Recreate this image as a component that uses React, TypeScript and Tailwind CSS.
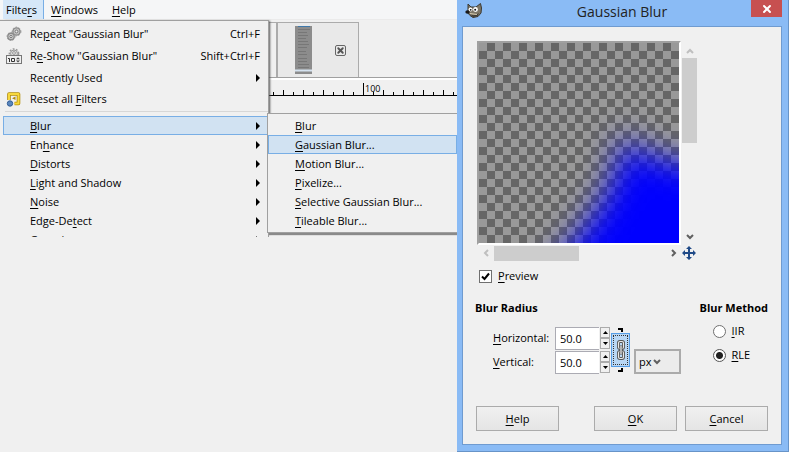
import React, { useState } from 'react';
import { XIcon } from 'lucide-react';

interface MenuEntry {
  label: string;
  mnemonic?: number;
  shortcut?: string;
  icon?: React.ReactNode;
  submenu?: boolean;
  active?: boolean;
}

// Underlines the access key of a caption
function Caption({ text, mnemonic }: { text: string; mnemonic?: number }) {
  if (mnemonic === undefined) return <>{text}</>;
  return (
    <>
      {text.slice(0, mnemonic)}
      <span className="underline underline-offset-2">{text[mnemonic]}</span>
      {text.slice(mnemonic + 1)}
    </>
  );
}

function GearsIcon() {
  return (
    <svg width="16" height="16" viewBox="0 0 16 16" fill="none">
      <circle cx="10.5" cy="5.5" r="3.6" fill="#c4c4c4" stroke="#8a8a8a" strokeWidth="1.4" />
      <circle cx="10.5" cy="5.5" r="4.4" stroke="#999" strokeWidth="1" strokeDasharray="1.6 1.6" />
      <circle cx="10.5" cy="5.5" r="1.4" fill="#eee" stroke="#777" />
      <circle cx="5" cy="10.5" r="3.2" fill="#cfcfcf" stroke="#8a8a8a" strokeWidth="1.4" />
      <circle cx="5" cy="10.5" r="4" stroke="#999" strokeWidth="1" strokeDasharray="1.5 1.5" />
      <circle cx="5" cy="10.5" r="1.2" fill="#eee" stroke="#777" />
    </svg>
  );
}

function ReshowIcon() {
  return (
    <svg width="16" height="16" viewBox="0 0 16 16" fill="none">
      <circle cx="8" cy="5.5" r="4.6" stroke="#999" strokeWidth="1.5" strokeDasharray="1.8 1.5" />
      <circle cx="8" cy="5.5" r="3.5" fill="#dcdcdc" stroke="#999" />
      <circle cx="8" cy="5" r="1.4" fill="#efefef" stroke="#999" />
      <rect x="0.5" y="7.5" width="15" height="8" fill="#f0f0f0" stroke="#777" />
      <path d="M2 10.5H3.5V14M5.5 10.5h3v3h-3z" stroke="#333" />
      <path d="M10 11.3h4L12 9.3zM10 12.5h4L12 14.5z" fill="#444" />
    </svg>
  );
}

function ResetIcon() {
  return (
    <svg width="16" height="16" viewBox="0 0 16 16" fill="none">
      <path d="M3 9V3H12.5V12.5H8.5" stroke="#b28c0a" strokeWidth="3.6" strokeLinejoin="round" />
      <path d="M3 9V3H12.5V12.5H8.5" stroke="#f7d83c" strokeWidth="2" strokeLinejoin="round" />
      <path d="M9.5 5.5V9L6 7.2z" fill="#b28c0a" />
      <circle cx="4" cy="12.5" r="2.7" fill="#5b87bd" stroke="#315c96" />
    </svg>
  );
}

function WilberIcon() {
  return (
    <svg width="18" height="16" viewBox="0 0 18 16">
      <path d="M3 1L6 4L11 4L15.5 0.5L16.5 5L16 10L13 13.5L8 14.5L5 12.5L3 10Z" fill="#7d7666" stroke="#3b3831" />
      <path d="M5 11Q9 14 14 10L12.5 13L8 14Z" fill="#3d3a33" />
      <circle cx="5.5" cy="6.5" r="2" fill="#fff" />
      <circle cx="10.5" cy="6.5" r="2.4" fill="#fff" />
      <circle cx="5.7" cy="6.8" r="0.9" fill="#111" />
      <circle cx="10.2" cy="6.8" r="1" fill="#111" />
      <ellipse cx="2.5" cy="9" rx="2.2" ry="1.7" fill="#1a1a1a" />
      <path d="M5 10.5L12 11.5" stroke="#d8ccb0" />
    </svg>
  );
}

function MoveIcon() {
  return (
    <svg width="14" height="14" viewBox="0 0 14 14" fill="#204a87">
      <path d="M7 0L10 3H8V6H11V4L14 7L11 10V8H8V11H10L7 14L4 11H6V8H3V10L0 7L3 4V6H6V3H4Z" />
    </svg>
  );
}

function ChainIcon() {
  return (
    <svg width="8" height="20" viewBox="0 0 8 20" fill="none">
      <rect x="1.5" y="1.5" width="5" height="7" rx="1.5" stroke="#555" strokeWidth="3" />
      <rect x="1.5" y="11.5" width="5" height="7" rx="1.5" stroke="#555" strokeWidth="3" />
      <rect x="1.5" y="1.5" width="5" height="7" rx="1.5" stroke="#e8e8e8" strokeWidth="1.2" />
      <rect x="1.5" y="11.5" width="5" height="7" rx="1.5" stroke="#e8e8e8" strokeWidth="1.2" />
      <path d="M4 5.5V14.5" stroke="#555" strokeWidth="3" />
      <path d="M4 6V14" stroke="#f4f4f4" strokeWidth="1.2" />
    </svg>
  );
}

function Chevron({ className, color }: { className?: string; color: string }) {
  return (
    <svg width="8" height="6" viewBox="0 0 8 6" fill="none" className={className}>
      <path d="M1 1L4 4L7 1" stroke={color} strokeWidth="2" />
    </svg>
  );
}

const filterItems: MenuEntry[] = [
  { label: 'Repeat "Gaussian Blur"', mnemonic: 2, shortcut: 'Ctrl+F', icon: <GearsIcon /> },
  { label: 'Re-Show "Gaussian Blur"', mnemonic: 1, shortcut: 'Shift+Ctrl+F', icon: <ReshowIcon /> },
  { label: 'Recently Used', submenu: true },
  { label: 'Reset all Filters', mnemonic: 10, icon: <ResetIcon /> },
];

const filterGroups: MenuEntry[] = [
  { label: 'Blur', mnemonic: 0, submenu: true, active: true },
  { label: 'Enhance', mnemonic: 2, submenu: true },
  { label: 'Distorts', mnemonic: 0, submenu: true },
  { label: 'Light and Shadow', mnemonic: 0, submenu: true },
  { label: 'Noise', mnemonic: 0, submenu: true },
  { label: 'Edge-Detect', mnemonic: 7, submenu: true },
  { label: 'Generic', mnemonic: 0, submenu: true },
];

const blurItems: MenuEntry[] = [
  { label: 'Blur', mnemonic: 0 },
  { label: 'Gaussian Blur...', mnemonic: 0, active: true },
  { label: 'Motion Blur...', mnemonic: 0 },
  { label: 'Pixelize...', mnemonic: 0 },
  { label: 'Selective Gaussian Blur...', mnemonic: 0 },
  { label: 'Tileable Blur...', mnemonic: 0 },
];

function MenuRow({ item, tall }: { item: MenuEntry; tall?: boolean }) {
  return (
    <button
      role="menuitem"
      className={`flex w-full shrink-0 items-center border pr-[7px] text-left whitespace-nowrap ${
        tall ? 'h-[22px]' : 'h-[19px]'
      } ${item.active ? 'border-[#78aee5] bg-[#d1e2f2]' : 'border-transparent'}`}
    >
      <span className="flex w-[26px] shrink-0 items-center pl-[2px]">{item.icon}</span>
      <span className="flex-1">
        <Caption text={item.label} mnemonic={item.mnemonic} />
      </span>
      {item.shortcut && <span>{item.shortcut}</span>}
      {item.submenu && (
        <svg width="4" height="8" viewBox="0 0 4 8">
          <path d="M0 0L4 4L0 8Z" />
        </svg>
      )}
    </button>
  );
}

function FiltersMenu() {
  return (
    <div
      role="menu"
      className="absolute top-5 left-0 h-[217px] w-[269px] overflow-hidden border-t border-r border-[#a0a0a0] bg-[#f0f0f0] pt-[2px] pl-[3px] shadow-[3px_-1px_2px_-2px_#555]"
    >
      {filterItems.map((item) => (
        <MenuRow key={item.label} item={item} tall={!!item.shortcut || item.submenu} />
      ))}
      <div className="mt-[3px] mb-1 ml-[2px] border-t border-[#d7d7d7]" />
      {filterGroups.map((item) => (
        <MenuRow key={item.label} item={item} />
      ))}
    </div>
  );
}

function BlurMenu() {
  return (
    <div
      role="menu"
      className="absolute top-[113px] right-0 left-[267px] border border-r-0 border-[#a0a0a0] bg-[#f0f0f0] py-[2px] shadow-[2px_2px_1px_#8a8a8a]"
    >
      {blurItems.map((item) => (
        <MenuRow key={item.label} item={item} />
      ))}
    </div>
  );
}

function Ruler() {
  return (
    <svg className="block h-4 w-full" shapeRendering="crispEdges">
      <defs>
        <pattern id="ticks" x="3" y="0" width="20" height="16" patternUnits="userSpaceOnUse">
          <path d="M0.5 10V16M10.5 12V16" stroke="#000" />
        </pattern>
      </defs>
      <rect width="100%" height="16" fill="url(#ticks)" />
      <path d="M363.5 3V16" stroke="#000" />
      <rect y="15" width="100%" height="1" />
      <text x="365" y="12" fontSize="9">100</text>
    </svg>
  );
}

function ImageWindow() {
  return (
    <section className="relative min-w-0 flex-1 overflow-hidden bg-[#f0f0f0]">
      <nav className="flex h-5 items-stretch border-b border-[#ebebeb] bg-[#f5f6f7] pl-[3px]">
        <button className="border-r border-[#78aee5] bg-[#d5e7f8] pr-[6px] pl-[3px]">
          <Caption text="Filters" mnemonic={5} />
        </button>
        <button className="px-[7px]">
          <Caption text="Windows" mnemonic={0} />
        </button>
        <button className="px-[7px]">
          <Caption text="Help" mnemonic={0} />
        </button>
      </nav>
      <div className="flex h-[58px] items-end border-b border-[#a0a0a0]">
        <div className="h-[55px] w-[276px] border-t border-[#ababab]" />
        <div className="flex h-[55px] w-[83px] items-center justify-between border border-b-0 border-l-2 border-[#ababab] bg-[#e9e9e9] pr-3 pl-[17px]">
          <svg width="17" height="48" viewBox="0 0 17 48">
            <rect width="17" height="48" fill="#8c8c8c" />
            <path
              d="M3 3.5H15M3 6.5H12M3 9.5H13M3 12.5H11M3 15.5H13M3 18.5H14M3 21.5H12M3 25.5H11M3 28.5H12M3 32.5H12M3 35.5H12M3 38.5H14M3 41.5H14"
              stroke="#777"
            />
            <path d="M3 0.5H15" stroke="#3e78aa" />
            <path d="M0 44.5H17" stroke="#d5e2ef" strokeWidth="2" />
          </svg>
          <button
            aria-label="Close image"
            className="flex size-[11px] items-center justify-center rounded-[2px] border border-[#666] text-[#555]"
          >
            <XIcon size={9} strokeWidth={5} />
          </button>
        </div>
      </div>
      <div className="border-t-2 border-white">
        <Ruler />
      </div>
      <FiltersMenu />
      <BlurMenu />
    </section>
  );
}

function PreviewCanvas() {
  return (
    <svg className="block" width="200" height="200" viewBox="0 0 200 200">
      <defs>
        <pattern id="checks" width="16" height="16" patternUnits="userSpaceOnUse">
          <rect width="16" height="16" fill="#999" />
          <path d="M8 0h8v8H8zM0 8h8v8H0z" fill="#666" />
        </pattern>
        <filter id="soft" x="-50%" y="-50%" width="200%" height="200%" colorInterpolationFilters="sRGB">
          <feGaussianBlur stdDeviation="16" />
        </filter>
      </defs>
      <rect width="200" height="200" fill="url(#checks)" />
      <path d="M30 270L92 205L119 168L136 136L144 96L170 114L200 121L300 126V300H30Z" fill="#00f" filter="url(#soft)" />
    </svg>
  );
}

function Preview() {
  return (
    <div className="ml-[2px] grid w-fit grid-cols-[204px_15px] gap-x-px">
      <div className="border-2 border-t-[#a0a0a0] border-r-white border-b-white border-l-[#a0a0a0]">
        <PreviewCanvas />
      </div>
      <div className="flex flex-col items-center justify-between pt-[7px] pb-[5px]">
        <div className="flex w-full flex-col items-center gap-1">
          <Chevron className="rotate-180" color="#bfbfbf" />
          <div className="h-[85px] w-[15px] bg-[#cdcdcd]" />
        </div>
        <Chevron color="#606060" />
      </div>
      <div className="flex h-4 items-center justify-between pr-[3px] pl-[5px]">
        <div className="flex items-center gap-1">
          <Chevron className="rotate-90" color="#bfbfbf" />
          <div className="h-[15px] w-[85px] bg-[#cdcdcd]" />
        </div>
        <Chevron className="-rotate-90" color="#606060" />
      </div>
      <button aria-label="Navigate preview" className="flex items-center">
        <MoveIcon />
      </button>
    </div>
  );
}

interface SpinProps {
  id: string;
  label: string;
  value: string;
  onChange: (value: string) => void;
}

function SpinField({ id, label, value, onChange }: SpinProps) {
  const step = (delta: number) => onChange((Number(value) + delta).toFixed(1));
  return (
    <div className="flex h-6 items-center">
      <label htmlFor={id} className="w-[62px]">
        <Caption text={label} mnemonic={0} />
      </label>
      <input
        id={id}
        value={value}
        onChange={(e) => onChange(e.target.value)}
        className="h-[23px] w-11 border border-r-0 border-[#ababb3] bg-white pl-1 outline-none"
      />
      <div className="flex flex-col pl-px">
        <button
          aria-label={`Increase ${label}`}
          onClick={() => step(1)}
          className="flex h-[11px] w-[10px] items-center justify-center border border-[#ababab]"
        >
          <svg width="5" height="3" viewBox="0 0 5 3">
            <path d="M0 3L2.5 0L5 3Z" />
          </svg>
        </button>
        <button
          aria-label={`Decrease ${label}`}
          onClick={() => step(-1)}
          className="flex h-[11px] w-[10px] items-center justify-center border border-[#ababab]"
        >
          <svg width="5" height="3" viewBox="0 0 5 3">
            <path d="M0 0L2.5 3L5 0Z" />
          </svg>
        </button>
      </div>
    </div>
  );
}

function MethodRadio({ label, checked, onSelect }: { label: string; checked: boolean; onSelect: () => void }) {
  return (
    <label className="flex h-6 items-center gap-[6px]">
      <input
        type="radio"
        name="method"
        checked={checked}
        onChange={onSelect}
        className="size-[13px] appearance-none rounded-full border border-[#707070] bg-white checked:border-[#555] checked:bg-[radial-gradient(circle,#222_3px,#fff_4px)]"
      />
      <span>
        <Caption text={label} mnemonic={0} />
      </span>
    </label>
  );
}

function DialogButton({ label }: { label: string }) {
  return (
    <button className="h-[25px] w-[83px] border border-[#ababab] bg-linear-to-b from-[#f0f0f0] to-[#e5e5e5]">
      <Caption text={label} mnemonic={0} />
    </button>
  );
}

function BlurDialog() {
  const [preview, setPreview] = useState(true);
  const [horizontal, setHorizontal] = useState('50.0');
  const [vertical, setVertical] = useState('50.0');
  const [method, setMethod] = useState('RLE');

  return (
    <section
      role="dialog"
      aria-labelledby="dialog-title"
      className="flex w-[332px] shrink-0 flex-col border-r border-b border-[#6894c8] bg-[#8abbf5] pr-[6px] pb-[6px] pl-[5px]"
    >
      <header className="flex h-[26px] items-start justify-between">
        <div className="w-[31px] pt-[3px] pl-[3px]">
          <WilberIcon />
        </div>
        <h1 id="dialog-title" className="text-sm leading-6 text-[#222]">
          Gaussian Blur
        </h1>
        <button
          aria-label="Close"
          className="flex h-[17px] w-[31px] items-center justify-center bg-[#c75050] text-white"
        >
          <XIcon size={12} strokeWidth={4} />
        </button>
      </header>
      <div className="flex flex-1 flex-col border border-[#6f9bd0] bg-[#f0f0f0] pt-[14px] pr-[13px] pb-[13px] pl-3">
        <Preview />
        <label className="mt-[5px] flex h-5 items-center gap-[6px] pl-1">
          <input
            type="checkbox"
            checked={preview}
            onChange={(e) => setPreview(e.target.checked)}
            className="peer size-[13px] appearance-none border border-[#707070] bg-white"
          />
          <svg
            width="9"
            height="9"
            viewBox="0 0 9 9"
            fill="none"
            className="invisible mr-[2px] -ml-[17px] peer-checked:visible"
          >
            <path d="M1 4.5L3.5 7L8 1.5" stroke="#000" strokeWidth="2" />
          </svg>
          <span>
            <Caption text="Preview" mnemonic={0} />
          </span>
        </label>
        <div className="mt-[14px] flex justify-between">
          <fieldset>
            <legend className="font-bold">Blur Radius</legend>
            <div className="mt-[10px] flex pl-[18px]">
              <div>
                <SpinField id="horizontal" label="Horizontal:" value={horizontal} onChange={setHorizontal} />
                <SpinField id="vertical" label="Vertical:" value={vertical} onChange={setVertical} />
              </div>
              <div className="ml-px flex flex-col items-center justify-center">
                <svg width="5" height="5" viewBox="0 0 5 5" fill="none">
                  <path d="M0 1H4V4" stroke="#000" strokeWidth="2" />
                </svg>
                <button
                  aria-label="Link values"
                  className="flex h-[34px] w-[19px] items-center justify-center border border-[#569de5] bg-[#b9d7f4] p-px"
                >
                  <span className="flex size-full items-center justify-center border border-dotted border-[#333]">
                    <ChainIcon />
                  </span>
                </button>
                <svg width="5" height="5" viewBox="0 0 5 5" fill="none">
                  <path d="M0 4H4V1" stroke="#000" strokeWidth="2" />
                </svg>
              </div>
              <div className="ml-1 flex h-[25px] w-[47px] items-center self-end border-2 border-[#ababab] bg-[#ececec] pl-[3px]">
                <select aria-label="Unit" className="w-[14px] appearance-none outline-none">
                  <option>px</option>
                </select>
                <Chevron color="#606060" />
              </div>
            </div>
          </fieldset>
          <fieldset>
            <legend className="font-bold">Blur Method</legend>
            <div className="mt-[3px] pl-[13px]">
              <MethodRadio label="IIR" checked={method === 'IIR'} onSelect={() => setMethod('IIR')} />
              <MethodRadio label="RLE" checked={method === 'RLE'} onSelect={() => setMethod('RLE')} />
            </div>
          </fieldset>
        </div>
        <footer className="mt-auto flex gap-2 pl-px">
          <DialogButton label="Help" />
          <div className="flex-1" />
          <DialogButton label="OK" />
          <DialogButton label="Cancel" />
        </footer>
      </div>
    </section>
  );
}

export default function App() {
  return (
    <main className="flex min-h-screen bg-[#f0f0f0] font-['Open_Sans','Noto_Sans',sans-serif] text-[11px] leading-4 text-black">
      <ImageWindow />
      <BlurDialog />
    </main>
  );
}
